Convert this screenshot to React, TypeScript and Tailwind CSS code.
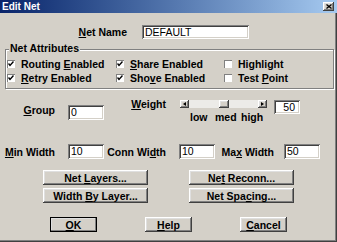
import type { ReactNode } from 'react';

const FONT = "font-['Liberation_Sans_Narrow','Liberation_Sans',Arial,sans-serif]";

const raised =
  'shadow-[inset_-1px_-1px_0_#404040,inset_1px_1px_0_#ffffff,inset_-2px_-2px_0_#808080,inset_2px_2px_0_#dfdfdf]';
const sunken =
  'shadow-[inset_1px_1px_0_#808080,inset_-1px_-1px_0_#ffffff,inset_2px_2px_0_#404040,inset_-2px_-2px_0_#d4d0c8]';

function U({ children }: { children: ReactNode }) {
  return <span className="underline decoration-1 underline-offset-[1px]">{children}</span>;
}

function TextBox({ value, className = '', right = false }: { value: string; className?: string; right?: boolean }) {
  return (
    <div
      className={`bg-white ${sunken} flex items-center px-[3px] font-normal text-[10.5px] leading-none ${
        right ? 'justify-end pr-[5px]' : ''
      } ${className}`}
    >
      {value}
    </div>
  );
}

function CheckBox({ checked, label }: { checked: boolean; label: ReactNode }) {
  return (
    <div className="flex items-center h-[14px]">
      <div className="w-[8px] h-[8px] bg-white shadow-[inset_1px_1px_0_#808080] flex items-center justify-center">
        {checked && (
          <svg width="6" height="6" viewBox="0 0 6 6">
            <path d="M0.5 2.5 L2 4.5 L5.5 0.5" fill="none" stroke="#000" strokeWidth="1.4" />
          </svg>
        )}
      </div>
      <span className="ml-[6px]">{label}</span>
    </div>
  );
}

function Btn({ children, className = '', def = false }: { children: ReactNode; className?: string; def?: boolean }) {
  return (
    <div
      className={`h-[15px] flex items-center justify-center bg-[#d4d0c8] ${raised} ${
        def ? 'outline outline-1 outline-black -outline-offset-1' : ''
      } ${className}`}
    >
      <span>{children}</span>
    </div>
  );
}

function Arrow({ dir }: { dir: 'l' | 'r' }) {
  return (
    <div className={`w-[9px] h-[8px] bg-[#d4d0c8] ${raised} flex items-center justify-center`}>
      <svg width="3" height="4" viewBox="0 0 3 4">
        <path d={dir === 'l' ? 'M3 0 L0 2 L3 4 Z' : 'M0 0 L3 2 L0 4 Z'} fill="#000" />
      </svg>
    </div>
  );
}

export default function App() {
  return (
    <div
      className={`${FONT} w-[337px] h-[242px] bg-[#d4d0c8] text-black font-bold text-[10.5px] leading-[12px] flex flex-col shadow-[inset_-1px_-1px_0_#404040,inset_-2px_-2px_0_#808080] overflow-hidden`}
    >
      {/* title bar */}
      <div className="h-[13px] flex items-center bg-gradient-to-r from-[#0a246a] to-[#a6caf0]">
        <span className="pl-[2px] text-white text-[10px]">Edit Net</span>
        <div className={`ml-auto mr-[3px] w-[11px] h-[9px] bg-[#d4d0c8] ${raised} flex items-center justify-center`}>
          <svg width="6" height="5" viewBox="0 0 6 5">
            <path d="M0.5 0.5 L5.5 4.5 M5.5 0.5 L0.5 4.5" stroke="#000" strokeWidth="1.3" />
          </svg>
        </div>
      </div>

      {/* net name */}
      <div className="mt-[12px] flex items-center h-[14px]">
        <span className="w-[127px] text-right">
          <U>N</U>et Name
        </span>
        <TextBox value="DEFAULT" className="ml-[15px] w-[107px] h-[14px]" />
      </div>

      {/* net attributes */}
      <div className="relative mt-[10px] ml-[5px] w-[329px] h-[40px] border border-[#808080] shadow-[inset_1px_1px_0_#ffffff,1px_1px_0_#ffffff]">
        <span className="absolute top-[-8px] left-[3px] px-[1px] bg-[#d4d0c8]">Net Attributes</span>
        <div className="pt-[7px] pl-[1px] grid grid-cols-[109px_108px_1fr]">
          <CheckBox checked label={<>Routing <U>E</U>nabled</>} />
          <CheckBox checked label={<><U>S</U>hare Enabled</>} />
          <CheckBox checked={false} label="Highlight" />
          <CheckBox checked label={<><U>R</U>etry Enabled</>} />
          <CheckBox checked label={<>Sho<U>v</U>e Enabled</>} />
          <CheckBox checked={false} label={<>Test <U>P</U>oint</>} />
        </div>
      </div>

      {/* group / weight */}
      <div className="mt-[9px] h-[30px] flex items-start">
        <span className="w-[55px] text-right mt-[6px]">
          <U>G</U>roup
        </span>
        <TextBox value="0" className="ml-[13px] mt-[7px] w-[36px] h-[15px]" />
        <span className="w-[62px] text-right">
          <U>W</U>eight
        </span>
        <div className="ml-[14px] mt-[2px] w-[87px] flex flex-col">
          <div className="h-[8px] flex">
            <Arrow dir="l" />
            <div className="flex-1 bg-[#ecebe8] flex justify-center">
              <div className={`w-[10px] h-[8px] bg-[#d4d0c8] ${raised}`} />
            </div>
            <Arrow dir="r" />
          </div>
          <div className="flex mt-[3px] font-bold">
            <span className="ml-[10px] w-[25px]">low</span>
            <span className="w-[26px]">med</span>
            <span>high</span>
          </div>
        </div>
        <TextBox value="50" right className="ml-[7px] mt-[2px] w-[26px] h-[14px]" />
      </div>

      {/* widths */}
      <div className="mt-[16px] h-[15px] flex items-center">
        <span className="w-[55px] text-right">
          <U>M</U>in Width
        </span>
        <TextBox value="10" className="ml-[13px] w-[36px] h-[15px]" />
        <span className="w-[62px] text-right">
          Conn Wi<U>d</U>th
        </span>
        <TextBox value="10" className="ml-[13px] w-[36px] h-[15px]" />
        <span className="w-[59px] text-right">
          Ma<U>x</U> Width
        </span>
        <TextBox value="50" className="ml-[10px] w-[36px] h-[15px]" />
      </div>

      {/* dialogs */}
      <div className="mt-[11px] pl-[43px] flex gap-[41px]">
        <div className="flex flex-col gap-[3px] w-[105px]">
          <Btn>
            Net <U>L</U>ayers...
          </Btn>
          <Btn>
            Width <U>B</U>y Layer...
          </Btn>
        </div>
        <div className="flex flex-col gap-[3px] w-[105px]">
          <Btn>
            Ne<U>t</U> Reconn...
          </Btn>
          <Btn>
            Net Spa<U>c</U>ing...
          </Btn>
        </div>
      </div>

      {/* ok / help / cancel */}
      <div className="mt-[14px] pl-[50px] flex gap-[48px]">
        <Btn def className="w-[47px]">
          <U>O</U>K
        </Btn>
        <Btn className="w-[47px]">
          <U>H</U>elp
        </Btn>
        <Btn className="w-[47px]">
          <U>C</U>ancel
        </Btn>
      </div>
    </div>
  );
}
